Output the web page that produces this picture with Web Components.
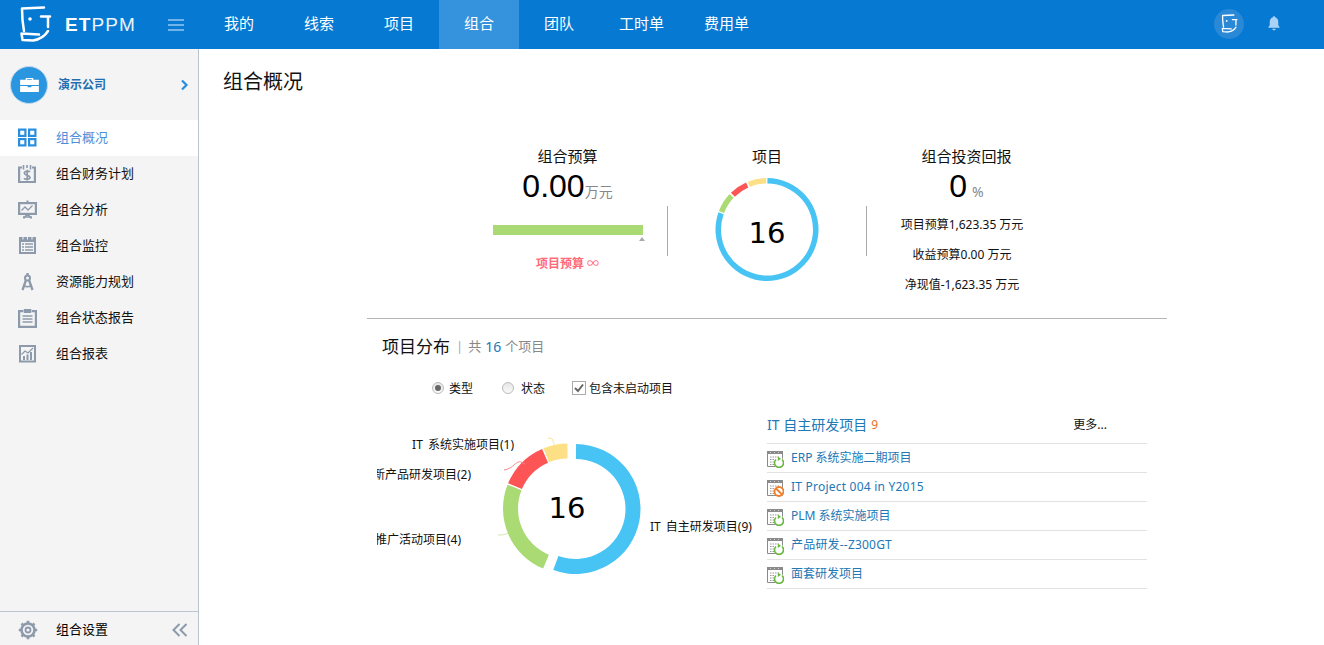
<!DOCTYPE html>
<html lang="zh-CN"><head><meta charset="utf-8"><title>组合概况</title>
<style>
html,body{margin:0;padding:0;height:645px;overflow:hidden;background:#fff;font-family:"Noto Sans","Noto Sans CJK SC",sans-serif;color:#000}
</style></head><body>
<et-app>
  <et-header slot="header"></et-header>
  <et-sidebar slot="side">
    <side-item icon="grid" active>组合概况</side-item>
    <side-item icon="budget">组合财务计划</side-item>
    <side-item icon="board">组合分析</side-item>
    <side-item icon="table">组合监控</side-item>
    <side-item icon="compass">资源能力规划</side-item>
    <side-item icon="clip">组合状态报告</side-item>
    <side-item icon="chart">组合报表</side-item>
  </et-sidebar>
  <et-overview slot="main"></et-overview>
</et-app>
<script>
function pt(cx,cy,r,a){const t=(a-90)*Math.PI/180;return [cx+r*Math.cos(t),cy+r*Math.sin(t)]}
function arc(cx,cy,ro,ri,a,b){
  const p=[pt(cx,cy,ro,a),pt(cx,cy,ro,b),pt(cx,cy,ri,b),pt(cx,cy,ri,a)].map(q=>q.map(n=>n.toFixed(2)).join(' '));
  const l=(b-a)>180?1:0;
  return `M${p[0]}A${ro} ${ro} 0 ${l} 1 ${p[1]}L${p[2]}A${ri} ${ri} 0 ${l} 0 ${p[3]}Z`;
}
const BLUE='#48c4f4',GREEN='#a9da74',RED='#fd5456',YEL='#fde086';
const LOGO=`<path d="M3 2.500 L25 1.500 M3 2.500 C3 10 3.500 17 5 25 M2.500 27.500 L20 28.500 M2.500 27.500 L3.500 34 L14 34.500 C20 33.500 26 30 29 25 M22 10.500 L31 10.500 M29 10.500 L29 21" fill="none" stroke="#fff" stroke-width="2.500" stroke-linecap="round" stroke-linejoin="round"/><circle cx="11" cy="13" r="1.800" fill="#fff"/>`;
const ICONS={
grid:`<g fill="none" stroke="#2a8ede" stroke-width="2.200"><rect x="1.100" y="1.600" width="6.300" height="6.300"/><rect x="11.100" y="1.600" width="6.300" height="6.300"/><rect x="1.100" y="11.100" width="6.300" height="6.300"/><rect x="11.100" y="11.100" width="6.300" height="6.300"/></g>`,
budget:`<g fill="none" stroke="#8c9aab" stroke-width="2.200"><path d="M4 3.500H1.100V18H16.900V3.500H14"/><path d="M5.500 1v4.500M9 1v3M12.500 1v4.500" stroke-width="1.600"/><path d="M12 8C11 6.800 6.300 6.800 6.300 9.100S12 11.300 12 13.500S7 15.700 6 14.300M9.200 5.800V16.500" stroke-width="1.700"/></g>`,
board:`<g fill="none" stroke="#8c9aab"><rect x="1.100" y="3.100" width="16.800" height="10.800" stroke-width="2.200"/><path d="M3.500 10.500L7 7l3 3 4.500-4.500" stroke-width="1.300"/><path d="M9.500 .5v2.500" stroke-width="2"/><path d="M9.500 14l-4 4.500M9.500 14l4 4.500M5 17h9" stroke-width="1.700"/></g>`,
table:`<path fill="#8c9aab" d="M1 1h17v17H1z"/><path fill="#f4f4f4" d="M3 6h13v10H3z"/><path fill="#8c9aab" d="M4 7.300h2v1.500H4zM7 7.300h8v1.500H7zM4 10.300h2v1.500H4zM7 10.300h8v1.500H7zM4 13.300h2v1.500H4zM7 13.300h8v1.500H7z"/><path d="M5 1v2.500M9.500 1v2.500M14 1v2.500" stroke="#f4f4f4"/>`,
compass:`<g fill="none" stroke="#8c9aab"><circle cx="9.500" cy="6" r="2.500" stroke-width="2"/><path d="M9.500 1v2.500M8 8L4.500 18M11 8L14.500 18" stroke-width="2.300"/><path d="M5.500 13.500C8 15 11 15 13.500 13.500" stroke-width="1.600"/></g>`,
clip:`<g fill="none" stroke="#8c9aab"><path d="M5 3.100H1.100V18.900H17.900V3.100H14" stroke-width="2.200"/><path d="M6 1.500h7v3H6z" fill="#8c9aab" stroke-width="1"/><path d="M4.500 8h10M4.500 11h10M4.500 14h10" stroke-width="1.700"/></g>`,
chart:`<g fill="none" stroke="#8c9aab"><rect x="2" y="2" width="15" height="15.500" stroke-width="2"/><path d="M3.500 10.500L7 7l3 2L15 4" stroke-width="1.300"/></g><path fill="#8c9aab" d="M5 12h2v4H5zM8.500 10.500h2V16h-2zM12 8h2v8h-2z"/>`,
gear:`<g fill="none" stroke="#8c9aab"><circle cx="10" cy="10" r="6.500" stroke-width="2.600"/><circle cx="10" cy="10" r="2.500" stroke-width="1.800"/><path stroke-width="2.600" d="M10 .8v2.500M10 16.700v2.500M.8 10h2.500M16.700 10h2.500M3.500 3.500l1.800 1.800M14.700 14.700l1.800 1.800M3.500 16.500l1.800-1.800M14.700 5.300l1.800-1.800"/></g>`
};
function def(name,html,init){
  customElements.define(name,class extends HTMLElement{
    constructor(){super();this.attachShadow({mode:'open'}).innerHTML=typeof html==='function'?html(this):html}
    connectedCallback(){ if(init) init(this) }
  });
}
def('et-app',`<style>
:host{display:flex;flex-direction:column;height:645px;width:1324px;overflow:hidden}
.b{display:flex;flex:1;min-height:0}
</style><slot name="header"></slot><div class="b"><slot name="side"></slot><slot name="main"></slot></div>`);

def('et-header',`<style>
:host{display:flex;height:49px;background:#0679d2;color:#fff;align-items:stretch;flex:none}
.brand{width:199px;box-sizing:border-box;display:flex;align-items:center;padding-left:19px;flex:none}
.brand svg{display:block;flex:none}
.name{margin-left:13px;font:400 19px/49px "Liberation Sans",sans-serif;letter-spacing:1.100px}
.name b{font-weight:700}.name span{font-weight:400;opacity:.92}
.burger{margin-left:auto;margin-right:15px;width:16px;height:12px;display:flex;flex-direction:column;justify-content:space-between}
.burger i{display:block;height:2px;background:#73b4e8}
nav{display:flex;flex:1}
a{box-sizing:border-box;min-width:80px;padding:0 20px;text-align:center;font-size:15px;line-height:47px;color:#fff}
a.on{background:#3593de}
.user{width:30px;height:30px;border-radius:50%;background:#2a89d7;margin:9px 24px 0 0;display:flex;align-items:center;justify-content:center}
.bell{margin:16px 44px 0 0}
</style>
<div class="brand"><svg width="33" height="38" viewBox="0 0 33 38">${LOGO}</svg><div class="name"><b>ET</b><span>PPM</span></div><div class="burger"><i></i><i></i><i></i></div></div>
<nav><a>我的</a><a>线索</a><a>项目</a><a class="on">组合</a><a>团队</a><a>工时单</a><a>费用单</a></nav>
<div class="user"><svg width="17" height="20" viewBox="0 0 33 38">${LOGO}</svg></div>
<svg class="bell" width="12" height="15" viewBox="0 0 14 17"><path fill="#a9d2f5" d="M7 0c.8 0 1.300.5 1.400 1.300C10.800 2 12 4 12 7v3.500l1.500 2v1H.5v-1L2 10.500V7c0-3 1.200-5 3.600-5.700C5.700.5 6.200 0 7 0zM5 14.500h4C9 16 8 16.500 7 16.500S5 16 5 14.500z"/></svg>`);

def('et-sidebar',`<style>
:host{display:flex;flex-direction:column;box-sizing:border-box;width:199px;flex:none;background:#f4f4f4;border-right:1px solid #b9c5d1;height:596px}
.co{display:flex;align-items:center;height:71px;padding-left:10px;flex:none;box-sizing:border-box}
.dot{width:36px;height:36px;border-radius:50%;background:#2a96e0;border:1px solid #bcd7ec;display:flex;align-items:center;justify-content:center;flex:none}
.nm{margin:0 0 2px 10px;font-size:12px;font-weight:700;color:#1f6fb2;flex:1}
.ch{margin-right:9px;display:block}
.list{flex:1}
.ft{height:33px;border-top:1px solid #b9c5d1;display:flex;align-items:center;padding-left:18px;font-size:13px;flex:none}
.ft span{margin-left:18px;flex:1;line-height:33px;padding-top:1px}
.ft svg{display:block;margin-top:3px}
.ft .c{margin-right:10px}
</style>
<div class="co"><div class="dot"><svg width="19" height="15" viewBox="0 0 20 16"><path fill="#fff" d="M6 3V1h8v2h6v5.500H0V3zm1.500 0h5V2h-5zM0 9.500h8V11h4V9.500h8V16H0z"/></svg></div><div class="nm">演示公司</div>
<svg class="ch" width="9" height="12" viewBox="0 0 9 12"><path d="M2 1.500L6.500 6 2 10.500" fill="none" stroke="#2a8ede" stroke-width="2.200"/></svg></div>
<div class="list"><slot></slot></div>
<div class="ft"><svg width="20" height="20" viewBox="0 0 20 20">${ICONS.gear}</svg><span>组合设置</span>
<svg class="c" width="16" height="14" viewBox="0 0 16 14"><path d="M7.500 1L1.500 7l6 6M14.500 1l-6 6 6 6" fill="none" stroke="#8c9aab" stroke-width="2"/></svg></div>`);

def('side-item',h=>`<style>
:host{display:flex;align-items:center;height:36px;padding-left:18px;font-size:13px;color:#111}
:host([active]){background:#fff;color:#4a90d9}
svg{display:block;flex:none}
span{margin:0 0 3px 18px}
</style><svg width="20" height="20" viewBox="0 0 20 20">${ICONS[h.getAttribute('icon')]}</svg><span><slot></slot></span>`);

def('stat-title',`<style>:host{display:block;font-size:15px;line-height:18px;height:20px;text-align:center;color:#111}</style><slot></slot>`);
def('big-num',`<style>:host{display:block;text-align:center;font:32px/38px "Liberation Sans","Noto Sans CJK SC",sans-serif;height:38px;color:#000}
::slotted(small){font:14px/14px "Noto Sans","Noto Sans CJK SC",sans-serif;color:#888}</style><slot></slot>`);

def('donut-small',`<style>:host{display:block;width:104px;height:104px;margin:10px auto 0}svg{display:block}
text{font:29px "DejaVu Sans",sans-serif;fill:#000}</style>
<svg width="104" height="104" viewBox="0 0 104 104">
<path fill="${BLUE}" d="${arc(52,52.500,51.500,46,.5,289.500)}"/>
<path fill="${GREEN}" d="${arc(52,52.500,51.500,46,291,313.500)}"/>
<path fill="${RED}" d="${arc(52,52.500,51.500,46,315.500,336)}"/>
<path fill="${YEL}" d="${arc(52,52.500,51.500,46,338,359)}"/>
<text x="52" y="66" text-anchor="middle">16</text></svg>`);

def('donut-big',`<style>
:host{display:block;position:relative;width:375px;height:205px;overflow:hidden;flex:none;font-size:12px;color:#111}
svg{position:absolute;left:0;top:0}
text{font:29px "DejaVu Sans",sans-serif;fill:#000}
.l{position:absolute;line-height:16px;white-space:nowrap;word-spacing:2px}
</style>
<svg width="375" height="205" viewBox="0 0 375 205">
<path fill="${BLUE}" d="${arc(198.500,111,65,50,.5,200)}"/>
<path fill="${GREEN}" d="${arc(191,110.500,65,50,202.500,291.500)}"/>
<path fill="${RED}" d="${arc(191,110.500,65,50,292.800,336.500)}"/>
<path fill="${YEL}" d="${arc(191,110.500,65,50,337.800,359.500)}"/>
<g fill="none" stroke-width="1">
<path stroke="${YEL}" d="M171 40c3 0 5 1 5 2.500s1 3 1.500 4"/>
<path stroke="#f7888a" d="M127 72c5-1 8-3 10-5s5-4 7-3 2 1 4 2"/>
<path stroke="#cfe8b0" d="M121 137c4 0 7 0 10-2"/>
</g>
<text x="190" y="120" text-anchor="middle">16</text></svg>
<div class="l" style="right:238px;top:39px">IT 系统实施项目(1)</div>
<div class="l" style="right:281px;top:69px">新产品研发项目(2)</div>
<div class="l" style="right:291px;top:134px">推广活动项目(4)</div>
<div class="l" style="left:273px;top:121px">IT 自主研发项目(9)</div>`);

const grid=`<path fill="#fff" stroke="#8a8a8a" d="M.5 1.500h15v15H.5z"/><path fill="#8a8a8a" d="M0 1h16v3H0z"/><path fill="#fff" d="M3 2h1v1H3zM7 2h1v1H7zM11 2h1v1h-1z" opacity=".6"/><path stroke="#9a9a9a" stroke-dasharray="1.500 1" fill="none" d="M3 7h9M3 9.500h5M3 12h4M3 14.500h4"/>`;
const S={run:`${grid}<circle cx="12" cy="12.500" r="5.200" fill="#fff"/><path fill="none" stroke="#68b73e" stroke-width="1.600" d="M9 9.500a4.500 4.500 0 1 0 6 0"/><path fill="#68b73e" d="M10.800 6.500v4.500l3.200-2.300z"/>`,
stop:`${grid}<circle cx="12" cy="12.500" r="4.500" fill="#fff" stroke="#f07d28" stroke-width="1.800"/><path d="M9 9.500l6 6" stroke="#f07d28" stroke-width="1.800"/>`};
def('project-row',h=>`<style>
:host{display:flex;align-items:center;box-sizing:content-box;height:26px;padding-bottom:2px;border-bottom:1px solid #e2e2e2;font-size:12px;color:#2277b5}
svg{display:block;flex:none;margin-right:7px;margin-top:4px}
</style><svg width="17" height="18" viewBox="0 0 17 18">${S[h.getAttribute('s')]}</svg><slot></slot>`);

def('et-overview',`<style>
:host{display:block;flex:1;min-width:0;padding:0 13px 0 24px;box-sizing:border-box}
h1{margin:0;padding-top:20px;font-size:20px;font-weight:400;line-height:26px;color:#111}
.wrap{width:800px;margin:52px auto 0}
.stats{display:flex;height:171px;border-bottom:1px solid #b5b5b5;padding-left:101px;box-sizing:content-box}
.c1,.c3{width:199px}.c2{width:198px}
.sep{width:1px;height:50px;margin-top:59px;background:#aaa;flex:none}
.bar{width:150px;height:10px;background:${GREEN};margin:20px 0 0 25px}
.tri{width:0;height:0;border:3.5px solid transparent;border-top:0;border-bottom:4px solid #aaa;margin:2px 0 0 171px}
.lbl{margin-top:13px;text-align:center;font-size:12px;line-height:20px;font-weight:700;color:#ff6b78}
.lbl span{font-weight:400}
.rows{margin-top:5px;padding-right:9px;font-size:12px;line-height:30px;text-align:center;color:#111}
.sec{padding:18px 0 0 15px;display:flex;align-items:center;height:19px;font-size:13px;color:#888;line-height:19px}
.sec b{font-weight:400;font-size:17px;color:#111}
.sec i{font-style:normal;margin:0 5px 0 6px;color:#aaa}
.sec em{font-style:normal;color:#2277b5;font-size:14px;margin:0 4px}
.opt{display:flex;align-items:center;height:20px;margin:22px 0 0 65px;font-size:12px;color:#111}
.r{width:12px;height:12px;border-radius:50%;border:1px solid #bbb;background:linear-gradient(#e6e6e6,#fafafa);box-sizing:border-box;display:flex;align-items:center;justify-content:center;margin-right:5px;flex:none}
.r.on::after{content:"";width:6px;height:6px;border-radius:50%;background:#666}
.cb{display:block;margin-right:3px;flex:none}
.low{display:flex;margin-left:10px}
.list{width:380px;margin:8px 0 0 15px;flex:none}
.hd{display:flex;height:37px;border-bottom:1px solid #e2e2e2;line-height:37px;font-size:14px;color:#2277b5}
.hd u{text-decoration:none;color:#e8702a;font-size:12px;margin-left:4px}
.hd span:last-child{margin-left:auto;margin-right:40px;font-size:12px;color:#111}
</style>
<h1>组合概况</h1>
<div class="wrap">
 <div class="stats">
  <div class="c1"><stat-title>组合预算</stat-title><big-num>0.00<small>万元</small></big-num><div class="bar"></div><div class="tri"></div><div class="lbl">项目预算 <span>∞</span></div></div>
  <div class="sep"></div>
  <div class="c2"><stat-title>项目</stat-title><donut-small></donut-small></div>
  <div class="sep"></div>
  <div class="c3"><stat-title>组合投资回报</stat-title><big-num>0<small style="margin-left:5px">%</small></big-num><div class="rows">项目预算1,623.35 万元<br>收益预算0.00 万元<br>净现值-1,623.35 万元</div></div>
 </div>
 <div class="sec"><b>项目分布</b><i>|</i>共<em>16</em>个项目</div>
 <div class="opt"><span class="r on"></span>类型<span class="r" style="margin-left:29px"></span><span style="margin-left:2px">状态</span>
  <svg class="cb" style="margin-left:27px" width="14" height="14" viewBox="0 0 14 14"><rect x=".5" y=".5" width="13" height="13" fill="#fff" stroke="#aaa"/><path d="M3 7l3 3 5-6.500" fill="none" stroke="#666" stroke-width="2"/></svg>包含未启动项目</div>
 <div class="low">
  <donut-big></donut-big>
  <div class="list">
   <div class="hd"><span>IT 自主研发项目</span><u>9</u><span>更多...</span></div>
   <project-row s="run">ERP 系统实施二期项目</project-row>
   <project-row s="stop" style="letter-spacing:.22px">IT Project 004 in Y2015</project-row>
   <project-row s="run">PLM 系统实施项目</project-row>
   <project-row s="run" style="letter-spacing:.2px">产品研发--Z300GT</project-row>
   <project-row s="run">面套研发项目</project-row>
  </div>
 </div>
</div>`);
</script>
</body></html>
